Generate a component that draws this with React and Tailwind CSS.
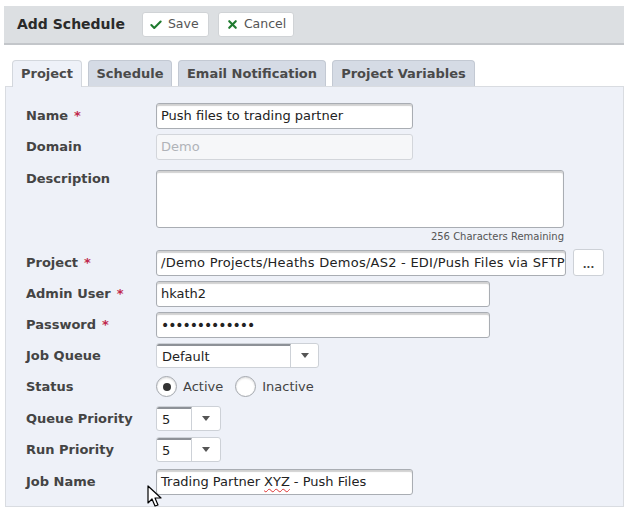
import { Check, X } from "lucide-react"

const inputCls =
  "h-[26px] bg-white border border-[#a9adb3] rounded-[3px] shadow-[inset_0_2px_1px_rgba(0,0,0,0.18)] px-[4px] flex items-center text-[13px] text-[#222] whitespace-nowrap overflow-hidden"

function Label({ children, required }) {
  return (
    <div className="w-[130px] shrink-0 text-[13px] font-bold text-[#444]">
      {children}
      {required && <span className="text-[#c0284c] ml-[6px]">*</span>}
    </div>
  )
}

function Caret() {
  return (
    <svg width="8" height="5" viewBox="0 0 8 5">
      <path d="M0 0 L8 0 L4 5 Z" fill="#555" />
    </svg>
  )
}

function Select({ value, width, split }) {
  return (
    <div
      className="h-[25px] bg-white border border-[#cdd1d7] rounded-[3px] flex text-[13px] text-[#222]"
      style={{ width }}
    >
      <div
        className="h-full flex items-center pl-[5px] border-r border-[#cdd1d7] border-t-2 border-t-[#8d9197] rounded-tl-[2px]"
        style={{ width: split }}
      >
        {value}
      </div>
      <div className="flex-1 flex items-center justify-center">
        <Caret />
      </div>
    </div>
  )
}

function Radio({ checked, label }) {
  return (
    <div className="flex items-center gap-[6px]">
      <div className="w-[21px] h-[21px] rounded-full border border-[#a3a7ad] bg-white flex items-center justify-center shadow-[inset_0_1px_2px_rgba(0,0,0,0.15)]">
        {checked && <div className="w-[8px] h-[8px] rounded-full bg-[#333]" />}
      </div>
      <span className="text-[13px] text-[#444]">{label}</span>
    </div>
  )
}

export default function App() {
  const tabs = ["Project", "Schedule", "Email Notification", "Project Variables"]
  const tabWidths = [70, 84, 148, 143]

  return (
    <div className="relative w-[624px] h-[519px] bg-white pt-[6px] pl-[4px] font-['DejaVu_Sans',sans-serif] overflow-hidden">
      {/* Header bar */}
      <div className="h-[39px] bg-[#dcdfe2] border-b-2 border-[#c3c6ca] flex items-center pl-[13px]">
        <span className="text-[14px] font-bold text-[#2a2a2a] mr-[17px]">Add Schedule</span>
        <button className="h-[25px] w-[67px] bg-white border border-[#d0d3d6] rounded-[3px] flex items-center pl-[6px] gap-[5px] text-[12.5px] text-[#555] mr-[9px]">
          <Check className="w-[14px] h-[14px] text-[#1e7a2e]" strokeWidth={3.5} />
          Save
        </button>
        <button className="h-[25px] w-[76px] bg-white border border-[#d0d3d6] rounded-[3px] flex items-center pl-[7px] gap-[5px] text-[12.5px] text-[#555]">
          <X className="w-[13px] h-[13px] text-[#1e7a2e]" strokeWidth={4} />
          Cancel
        </button>
      </div>

      {/* Tabs */}
      <div className="mt-[15px] flex items-end gap-[6px] pl-[8px] h-[26px]">
        {tabs.map((t, i) => (
          <div
            key={t}
            className={`h-[26px] rounded-t-[4px] border border-b-0 flex items-center justify-center text-[13px] font-bold text-[#4a4a4a] ${
              i === 0
                ? "bg-[#eef1f8] border-[#d3d7dd] relative top-[1px] h-[27px]"
                : "bg-[#d5dbe5] border-[#c3c9d3]"
            }`}
            style={{ width: tabWidths[i] }}
          >
            {t}
          </div>
        ))}
      </div>

      {/* Panel */}
      <div className="ml-[1px] h-[421px] bg-[#eef1f8] border border-[#d9dce1] pl-[20px] pt-[16px]">
        <div className="flex items-center">
          <Label required>Name</Label>
          <div className={`${inputCls} w-[257px]`}>Push files to trading partner</div>
        </div>

        <div className="flex items-center mt-[5px]">
          <Label>Domain</Label>
          <div className="h-[26px] w-[257px] bg-[#f6f7f9] border border-[#d3d6db] rounded-[3px] px-[4px] flex items-center text-[13px] text-[#b0b3b8]">
            Demo
          </div>
        </div>

        <div className="flex items-start mt-[10px]">
          <div className="-mt-[1px]">
            <Label>Description</Label>
          </div>
          <div className="w-[408px] h-[58px] bg-white border border-[#a9adb3] rounded-[3px] shadow-[inset_0_2px_1px_rgba(0,0,0,0.18)]" />
        </div>
        <div className="w-[538px] text-right text-[10px] text-[#555] leading-[12px] mt-[3px]">
          256 Characters Remaining
        </div>

        <div className="flex items-center mt-[6px]">
          <Label required>Project</Label>
          <div className={`${inputCls} w-[410px] tracking-[0.25px]`}>/Demo Projects/Heaths Demos/AS2 - EDI/Push Files via SFTP</div>
          <button className="ml-[7px] w-[31px] h-[27px] bg-white border border-[#cdd1d7] rounded-[3px] flex items-end justify-center pb-[5px] text-[10px] font-bold text-[#444] leading-none">
            ...
          </button>
        </div>

        <div className="flex items-center mt-[5px]">
          <Label required>Admin User</Label>
          <div className={`${inputCls} w-[334px]`}>hkath2</div>
        </div>

        <div className="flex items-center mt-[5px]">
          <Label required>Password</Label>
          <div className={`${inputCls} w-[334px] text-[14px] tracking-[-1.1px]`}>•••••••••••••</div>
        </div>

        <div className="flex items-center mt-[5px]">
          <Label>Job Queue</Label>
          <Select value="Default" width={163} split={134} />
        </div>

        <div className="flex items-center mt-[6px] h-[25px]">
          <Label>Status</Label>
          <div className="flex items-center gap-[12px]">
            <Radio checked label="Active" />
            <Radio label="Inactive" />
          </div>
        </div>

        <div className="flex items-center mt-[7px]">
          <Label>Queue Priority</Label>
          <Select value="5" width={65} split={35} />
        </div>

        <div className="flex items-center mt-[6px]">
          <Label>Run Priority</Label>
          <Select value="5" width={65} split={35} />
        </div>

        <div className="flex items-center mt-[7px]">
          <Label>Job Name</Label>
          <div className={`${inputCls} w-[257px]`}>
            Trading Partner{" "}
            <span className="mx-[4px] underline decoration-wavy decoration-[#d33] decoration-1 underline-offset-2">XYZ</span>
            - Push Files
          </div>
        </div>
      </div>

      {/* Mouse cursor */}
      <svg className="absolute left-[147px] top-[485px]" width="16" height="23" viewBox="0 0 16 23">
        <path
          d="M1 1 L1 18 L5 14 L8 21 L11 20 L8 13 L14 13 Z"
          fill="#fff"
          stroke="#000"
          strokeWidth="1.2"
          strokeLinejoin="round"
        />
      </svg>
    </div>
  )
}
